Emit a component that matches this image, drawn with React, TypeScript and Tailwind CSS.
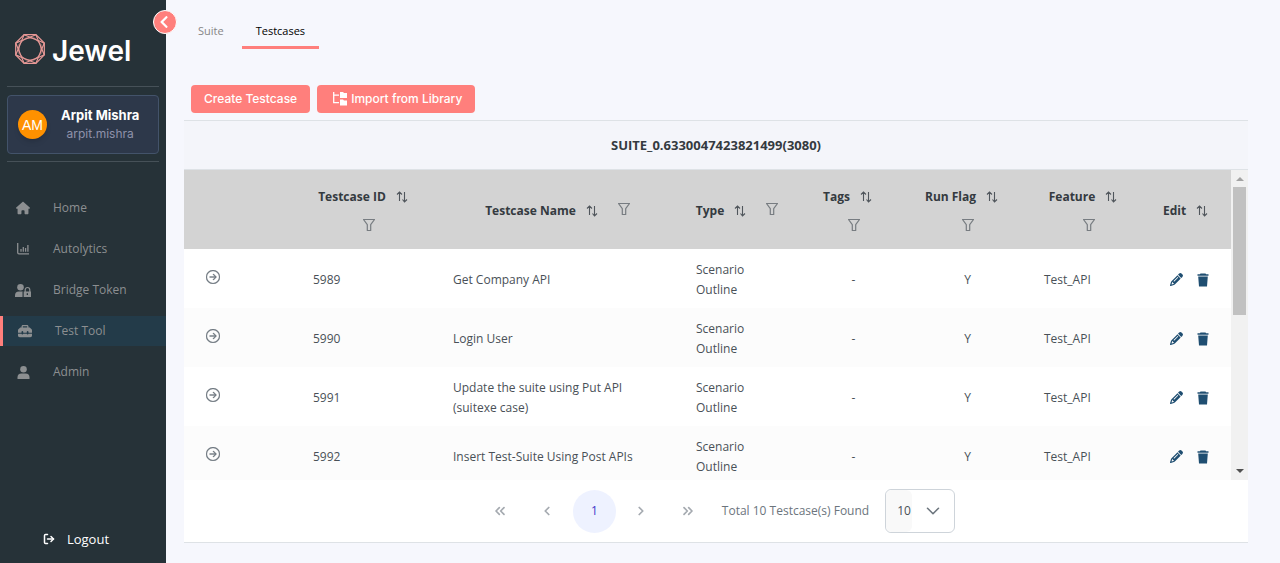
import React from "react";
import { FaChevronLeft } from "react-icons/fa";
import { FaHouse, FaPencil, FaToolbox } from "react-icons/fa6";
import { FiLogOut } from "react-icons/fi";
import { BsArrowRightCircle } from "react-icons/bs";
import { ChevronDown, ChevronLeft, ChevronRight, ChevronsLeft, ChevronsRight } from "lucide-react";

function GemLogo() {
  const point = (i: number, r: number) => {
    const a = ((i * 45 + 22.5) * Math.PI) / 180;
    return `${(16 + r * Math.cos(a)).toFixed(2)},${(16 + r * Math.sin(a)).toFixed(2)}`;
  };
  const idx = Array.from({ length: 8 }, (_, i) => i);
  const ring = (r: number, from: number) => idx.map((i) => point(from + i, r)).join(" ");
  return (
    <svg viewBox="0 0 32 32" className="size-8" fill="none" stroke="#e79896" strokeWidth="1.2" aria-hidden="true">
      <polygon points={ring(15.5, 0)} />
      <polygon points={ring(11.8, 0.5)} />
      <polygon points={ring(11.8, 0)} strokeWidth="0.8" />
      {idx.map((i) => (
        <polyline key={i} points={`${point(i, 15.5)} ${point(i + 0.5, 11.8)} ${point(i + 1, 15.5)}`} />
      ))}
    </svg>
  );
}

function SortIcon() {
  return (
    <svg viewBox="0 0 12 12" className="size-3" fill="none" stroke="#50565c" strokeWidth="1.1" aria-hidden="true">
      <path d="M3.5 10V1M1 3.5 3.5 1 6 3.5M8.5 1v10M6.5 8.5l2 2.5 2.5-2.5" />
    </svg>
  );
}

function FilterIcon() {
  return (
    <svg viewBox="0 0 12 12" className="size-3" fill="none" stroke="#777c81" strokeWidth="1.2" strokeLinejoin="round" aria-hidden="true">
      <path d="M.5.5h11L7.7 5.7v5.8H4.3V5.7z" />
    </svg>
  );
}

function TreeIcon() {
  return (
    <svg viewBox="0 0 14 14" className="size-3.5" aria-hidden="true">
      <path d="M.7 0v10.7H6M.7 3.2H6" fill="none" stroke="white" strokeWidth="1.3" />
      <path d="M7 0h3l1 1h3v5H7zM7 7.5h3l1 1h3V13.500H7z" fill="white" />
    </svg>
  );
}

function TrashIcon() {
  return (
    <svg viewBox="0 0 12 14" className="h-3.5 w-3" fill="#1f4e71" aria-hidden="true">
      <path d="M3.500.5h5l.6.8H11.500v1.500H.5V1.300h2.400zM1.200 3.600h9.600l-.8 9.900H2z" />
    </svg>
  );
}

function ChartIcon({ className }: { className?: string }) {
  return (
    <svg viewBox="0 0 12 12" className={className} fill="none" stroke="currentColor" strokeWidth="1.3" aria-hidden="true">
      <path d="M.7 0v9.6q0 1.300 1.300 1.300h10M4 6v2.700M6.300 4v4.700M8.600 5v3.700M10.900 2v6.700" />
    </svg>
  );
}

function PersonIcon({ className }: { className?: string }) {
  return (
    <svg viewBox="0 0 13 13" className={className} fill="currentColor" aria-hidden="true">
      <circle cx="6.5" cy="3.300" r="3.300" />
      <path d="M.5 13v-1.500q0-4 4-4h4q4 0 4 4V13z" />
    </svg>
  );
}

function PersonLockIcon({ className }: { className?: string }) {
  return (
    <svg viewBox="0 0 16 13" className={className} fill="currentColor" aria-hidden="true">
      <circle cx="5.500" cy="3.300" r="3.300" />
      <path d="M0 13v-1.500q0-4 4-4h3.800q-.3.400-.3 1V13z" />
      <path d="M10.200 8V5.800a2.300 2.300 0 0 1 4.600 0V8" fill="none" stroke="currentColor" strokeWidth="1.200" />
      <path fillRule="evenodd" d="M8.700 7.500H16V13H8.700zM11.700 9.300v1.800h1.300V9.300z" />
    </svg>
  );
}

const nav = [
  { label: "Home", icon: FaHouse, size: "size-3.5" },
  { label: "Autolytics", icon: ChartIcon, size: "size-3" },
  { label: "Bridge Token", icon: PersonLockIcon, size: "h-[13px] w-4" },
  { label: "Test Tool", icon: FaToolbox, size: "size-3.5", active: true },
  { label: "Admin", icon: PersonIcon, size: "size-[13px]" },
];

function Sidebar() {
  return (
    <aside className="relative flex w-[166px] shrink-0 flex-col bg-[#263238]">
      <button
        type="button"
        aria-label="Collapse sidebar"
        className="absolute top-2.5 -right-[11px] flex size-6 items-center justify-center rounded-full border border-white bg-[#ff7f7c] pr-0.5 text-white"
      >
        <FaChevronLeft className="size-3.5" />
      </button>
      <div className="flex items-start gap-1.5 px-3.5 pt-[33px] font-['Inter','Open_Sans',sans-serif]">
        <GemLogo />
        <span className="text-[28px] leading-9 font-semibold text-white">Jewel</span>
      </div>
      <div className="mx-[7px] mt-[17px] border-y border-[#465158] pt-2 pb-[7px]">
        <div className="flex items-center gap-3.5 rounded border border-[#43536a] bg-[#2d384a] px-2.5 py-2.5 font-['Inter','Open_Sans',sans-serif]">
          <span className="flex size-[29px] shrink-0 items-center justify-center rounded-full bg-[#ff9100] font-['Liberation_Sans',sans-serif] text-sm text-white shadow-md">
            AM
          </span>
          <span className="flex flex-col items-center whitespace-nowrap">
            <span className="text-[13px] leading-[19px] font-bold text-white">Arpit Mishra</span>
            <span className="text-[12px] leading-[18px] text-[#8f92ab]">arpit.mishra</span>
          </span>
        </div>
      </div>
      <nav className="mt-[31px] flex flex-col gap-[11px]">
        {nav.map(({ label, icon: Icon, size, active }) => (
          <a
            key={label}
            href="#"
            className={
              active
                ? "flex h-[30px] items-center gap-[22px] border-l-[3px] border-[#ff7f7c] bg-[#233b49] pl-3.5 text-[12px] text-[#8c8f91]"
                : "flex h-[30px] items-center gap-[22px] pl-[15px] text-[12px] text-[#8c8f91]"
            }
          >
            <span className="flex w-4 justify-center">
              <Icon className={size} />
            </span>
            {label}
          </a>
        ))}
      </nav>
      <a href="#" className="mt-auto mb-3 flex items-center justify-center gap-3 pr-3.5 text-[13px] leading-6 text-white">
        <FiLogOut className="size-3" strokeWidth={3} />
        Logout
      </a>
    </aside>
  );
}

type Head = { label: string; filter?: "inline" | "below"; width: string };

const columns: Head[] = [
  { label: "", width: "w-[115px]" },
  { label: "Testcase ID", filter: "below", width: "w-[140px]" },
  { label: "Testcase Name", filter: "inline", width: "w-[243px]" },
  { label: "Type", filter: "inline", width: "w-[116px]" },
  { label: "Tags", filter: "below", width: "w-[111px]" },
  { label: "Run Flag", filter: "below", width: "w-[117px]" },
  { label: "Feature", filter: "below", width: "w-[126px]" },
  { label: "Edit", width: "w-[79px]" },
];

function HeaderCell({ label, filter, width }: Head) {
  return (
    <th className={`${width} p-0 align-middle font-bold`}>
      {label && (
        <div className={filter === "below" ? "flex flex-col items-center gap-3 pb-0.5" : "flex justify-center pt-0.5"}>
          <div className="flex items-center whitespace-nowrap">
            {label}
            <button type="button" aria-label={`Sort by ${label}`} className={filter === "inline" ? "ml-2.5" : "mr-3 ml-2.5"}>
              <SortIcon />
            </button>
            {filter === "inline" && (
              <button type="button" aria-label={`Filter ${label}`} className="mr-1.5 mb-1 ml-5">
                <FilterIcon />
              </button>
            )}
          </div>
          {filter === "below" && (
            <button type="button" aria-label={`Filter ${label}`}>
              <FilterIcon />
            </button>
          )}
        </div>
      )}
    </th>
  );
}

const rows = [
  { id: "5989", name: "Get Company API" },
  { id: "5990", name: "Login User" },
  { id: "5991", name: "Update the suite using Put API (suitexe case)" },
  { id: "5992", name: "Insert Test-Suite Using Post APIs" },
];

function TestcaseTable() {
  return (
    <table className="w-full table-fixed border-collapse text-[12px] leading-5">
      <thead className="bg-[#d3d3d3] text-[#343a40]">
        <tr className="h-[79px]">
          {columns.map((c, i) => (
            <HeaderCell key={i} {...c} />
          ))}
        </tr>
      </thead>
      <tbody className="text-[#495057]">
        {rows.map((r) => (
          <tr key={r.id} className="h-[59px] bg-white even:bg-[#fcfcfc]">
            <td className="pb-1 pl-[22px]">
              <button type="button" aria-label={`Open ${r.id}`} className="flex text-[#6c757d]">
                <BsArrowRightCircle className="size-3.5" strokeWidth={0.4} />
              </button>
            </td>
            <td className="px-3.5 pt-0.5">{r.id}</td>
            <td className="pt-0.5 pr-10 pl-3.5">{r.name}</td>
            <td className="px-3.5 pt-0.5">Scenario Outline</td>
            <td className="pt-0.5 text-center">-</td>
            <td className="pt-0.5 text-center">Y</td>
            <td className="pt-0.5 pl-[18px]">Test_API</td>
            <td className="pt-0.5 pr-1">
              <div className="flex items-center justify-center gap-3.5 text-[#1f4e71]">
                <button type="button" aria-label={`Edit ${r.id}`}>
                  <FaPencil className="size-[13px]" />
                </button>
                <button type="button" aria-label={`Delete ${r.id}`}>
                  <TrashIcon />
                </button>
              </div>
            </td>
          </tr>
        ))}
      </tbody>
    </table>
  );
}

function ScrollTrack() {
  return (
    <div className="flex w-[17px] shrink-0 flex-col items-center bg-[#f1f1f1] py-[7px]" aria-hidden="true">
      <svg viewBox="0 0 8 4" className="h-1 w-2" fill="#a3a3a3">
        <path d="M0 4 4 0l4 4z" />
      </svg>
      <div className="mt-1.5 h-32 w-[13px] bg-[#c1c1c1]" />
      <svg viewBox="0 0 8 4" className="mt-auto h-1 w-2" fill="#505050">
        <path d="M0 0h8L4 4z" />
      </svg>
    </div>
  );
}

function Paginator() {
  const btn = "flex h-11 w-[47px] items-center justify-center text-[#a5aab0]";
  return (
    <div className="flex items-center justify-center bg-white px-4 py-[9px] text-[12px] text-[#6c757d]">
      <button type="button" aria-label="First page" className={btn}><ChevronsLeft className="size-4" strokeWidth={2.5} /></button>
      <button type="button" aria-label="Previous page" className={btn}><ChevronLeft className="size-3.5" strokeWidth={3} /></button>
      <button type="button" className="mx-0.5 flex size-[43px] items-center justify-center rounded-full bg-[#eef2ff] text-[#4338ca]">1</button>
      <button type="button" aria-label="Next page" className={btn}><ChevronRight className="size-3.5" strokeWidth={3} /></button>
      <button type="button" aria-label="Last page" className={btn}><ChevronsRight className="size-4" strokeWidth={2.5} /></button>
      <span className="ml-2.5 whitespace-nowrap">Total 10 Testcase(s) Found</span>
      <div className="ml-4 flex h-11 w-[70px] items-center rounded-md border border-[#ced4da] text-[#495057]">
        <select aria-label="Rows per page" className="h-full w-[26px] appearance-none rounded-md bg-[#f9f9f9] pl-[11px]" defaultValue="10">
          <option>10</option>
          <option>20</option>
          <option>50</option>
        </select>
        <ChevronDown className="ml-2.5 size-[22px] text-[#6c757d]" strokeWidth={1.7} />
      </div>
    </div>
  );
}

export default function App() {
  return (
    <div className="flex min-h-screen bg-[#f6f7fd] font-['Open_Sans','Noto_Sans',sans-serif]">
      <Sidebar />
      <main className="min-w-0 flex-1 pr-8 pb-5 pl-[18px]">
        <div className="flex text-[11px] leading-[18px]">
          <a href="#" className="px-3.5 pt-[22px] pb-1.5 text-[#868686]">Suite</a>
          <a href="#" className="ml-1 border-b-[3px] border-[#ff7f7c] px-3.5 pt-[22px] pb-1.5 text-black">Testcases</a>
        </div>
        <div className="mt-9 flex gap-[7px] pl-[7px] font-['Inter','Open_Sans',sans-serif] text-[12px] font-medium text-white">
          <button type="button" className="h-7 rounded bg-[#ff7f7c] px-[13px]">Create Testcase</button>
          <button type="button" className="flex h-7 items-center gap-1 rounded bg-[#ff7f7c] pr-[13px] pl-4">
            <TreeIcon />
            Import from Library
          </button>
        </div>
        <section className="mt-[7px] border-y border-[#dee2e6]">
          <h1 className="border-b border-[#dee2e6] bg-[#f4f5fa] py-3.5 text-center text-[13px] leading-5 font-bold text-[#343a40]">
            SUITE_0.6330047423821499(3080)
          </h1>
          <div className="flex max-h-[310px]">
            <div className="min-w-0 flex-1 overflow-hidden">
              <TestcaseTable />
            </div>
            <ScrollTrack />
          </div>
          <Paginator />
        </section>
      </main>
    </div>
  );
}
